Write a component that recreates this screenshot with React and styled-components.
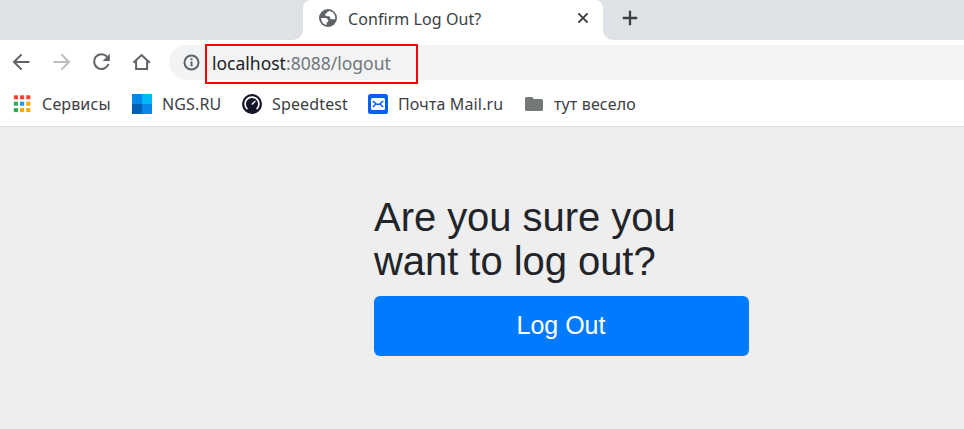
import React from "react";
import styled, { createGlobalStyle } from "styled-components";

const GlobalStyle = createGlobalStyle`
  * { box-sizing: border-box; }
  body { margin: 0; overflow: hidden; background: #eeeeee; }
`;

const Browser = styled.div`
  display: flex;
  flex-direction: column;
  height: 429px;
  overflow: hidden;
  font-family: "Noto Sans", sans-serif;
  color: #3c4043;
`;

const TabStrip = styled.header`
  display: flex;
  height: 40px;
  background: #fff;
`;

const StripSide = styled.div`
  width: ${(p) => p.$width || "auto"};
  flex: ${(p) => (p.$width ? "none" : 1)};
  background: #dee1e6;
  border-radius: ${(p) => (p.$width ? "0 0 10px 0" : "0 0 0 10px")};
`;

const TabBack = styled.div`
  width: 300px;
  background: linear-gradient(#dee1e6 20px, #fff 20px);
`;

const Tab = styled.div`
  display: flex;
  align-items: center;
  height: 40px;
  padding: 0 12px 4px 15px;
  background: #fff;
  border-radius: 8px 8px 0 0;
`;

const TabTitle = styled.span`
  flex: 1;
  margin: 2px 0 0 10px;
  font-size: 16px;
  line-height: 22px;
  letter-spacing: 0.07px;
  white-space: nowrap;
`;

const IconButton = styled.button`
  display: flex;
  padding: 0;
  border: 0;
  background: none;
  color: ${(p) => (p.$muted ? "#babcbe" : "#5f6368")};
`;

const CloseButton = styled(IconButton)`
  color: #3c4043;
`;

const NewTab = styled(IconButton)`
  margin: 10px 0 0 19px;
  color: #3c4043;
`;

const Toolbar = styled.nav`
  display: flex;
  align-items: center;
  height: 45px;
  padding: 0 0 1px 11px;
  gap: 20px;
  background: #fff;
`;

const AddressBar = styled.div`
  display: flex;
  align-items: center;
  flex: 1;
  height: 35px;
  margin: 1px 0 0 -2px;
  padding-left: 13px;
  background: #f1f3f4;
  border-radius: 18px 0 0 18px;
  color: #5f6368;
`;

const UrlBox = styled.div`
  display: flex;
  align-items: center;
  flex: none;
  width: 213px;
  height: 40px;
  margin: 2px 0 0 4px;
  padding: 0 0 2px 5px;
  border: 2px solid #ff0000;
  font-size: 17.5px;
  line-height: 24px;
  color: #73777a;
  white-space: nowrap;
`;

const Host = styled.span`
  color: #202124;
`;

const Bookmarks = styled.nav`
  display: flex;
  height: 42px;
  padding: 0 0 3px 12px;
  background: #fff;
  border-bottom: 1px solid #dadce0;
`;

const Bookmark = styled.a`
  display: flex;
  align-items: center;
  flex: none;
  width: ${(p) => p.$width}px;
  gap: 10px;
  font-size: 16px;
  line-height: 22px;
  letter-spacing: 0.14px;
  white-space: nowrap;
  svg { flex: none; }
`;

const Page = styled.main`
  flex: 1;
  padding: 68px 0 0 374px;
  background: #eeeeee;
  font-family: "Liberation Sans", Arial, sans-serif;
`;

const Heading = styled.h1`
  width: 375px;
  margin: 0 0 13px;
  font-size: 40px;
  font-weight: 400;
  line-height: 44px;
  letter-spacing: -0.05px;
  color: #212529;
`;

const LogoutButton = styled.button`
  display: block;
  width: 375px;
  height: 60px;
  padding: 0 1px 2px 0;
  border: 0;
  border-radius: 6px;
  background: #007bff;
  color: #fff;
  font: 25px/38px "Liberation Sans", Arial, sans-serif;
`;

const Stroke = ({ children, size = 20, width = 2 }) => (
  <svg width={size} height={size} viewBox={`0 0 ${size} ${size}`} fill="none" stroke="currentColor" strokeWidth={width}>
    {children}
  </svg>
);

const GlobeIcon = () => (
  <svg width="20" height="20" viewBox="0 0 20 20">
    <circle cx="10" cy="10" r="9" fill="#5f6368" />
    <path
      d="M11.2 3q-2.2.3-2.3 2.1-1.7.1-1.8 1.7.1 1.3 1.8 1.5h1.9q1.3.2 1.4 1.6.2 1.3 1.6 1.3h3.4q.4-4.9-3-7.1zM3 10.1h4.2q2.9.3 3.2 2.9-.1 1.3-1.8 1.5v2.6Q3.4 16.2 3 10.1z"
      fill="#fff"
    />
  </svg>
);

const GRID_COLORS = ["#f44336", "#f44336", "#f44336", "#34a853", "#2196f3", "#fbab00", "#34a853", "#fbab00", "#fbab00"];

const AppsIcon = () => (
  <svg width="20" height="20" viewBox="0 0 20 20">
    {GRID_COLORS.map((fill, i) => (
      <rect key={i} x={1.8 + (i % 3) * 6.2} y={1.3 + Math.floor(i / 3) * 6.4} width="4.2" height="4" fill={fill} />
    ))}
  </svg>
);

const NgsIcon = () => (
  <svg width="20" height="20" viewBox="0 0 20 20">
    <path fill="#0788e8" d="M0 0h10v10H0z" />
    <path fill="#00b8f5" d="M10 0h10v10H10z" />
    <path fill="#005fb2" d="M0 10h10v10H0z" />
    <path fill="#0788e8" d="M10 10h10v10H10z" />
  </svg>
);

const SpeedtestIcon = () => (
  <svg width="20" height="20" viewBox="0 0 20 20">
    <circle cx="10" cy="10" r="10" fill="#141526" />
    <path d="M5.4 15.1A6.9 6.9 0 1 1 14.6 15.1" fill="none" stroke="#fff" strokeWidth="1.7" />
    <path d="m9.3 9.9 3.8-3.4.8.8-3.4 3.8z" fill="#fff" />
  </svg>
);

const MailIcon = () => (
  <svg width="20" height="20" viewBox="0 0 20 20">
    <rect width="20" height="20" rx="2.5" fill="#005ff9" />
    <rect x="3" y="4" width="14" height="12" rx="1.5" fill="#fff" />
    <path d="m4.8 7 3.4 2.8q1.8 1.2 3.6 0L15.2 7M4.8 13l2.9-2.7M15.2 13l-2.9-2.7" fill="none" stroke="#005ff9" strokeWidth="1.5" />
  </svg>
);

const FolderIcon = () => (
  <svg width="20" height="20" viewBox="0 0 20 20">
    <path d="M1 4.5Q1 3 2.5 3H8l2 2h7.5Q19 5 19 6.5v9q0 1.5-1.5 1.5h-15Q1 17 1 15.5z" fill="#757879" />
  </svg>
);

const BOOKMARKS = [
  { label: "Сервисы", width: 120, Icon: AppsIcon },
  { label: "NGS.RU", width: 110, Icon: NgsIcon },
  { label: "Speedtest", width: 126, Icon: SpeedtestIcon },
  { label: "Почта Mail.ru", width: 156, Icon: MailIcon },
  { label: "тут весело", width: 130, Icon: FolderIcon },
];

export default function App() {
  return (
    <Browser>
      <GlobalStyle />
      <TabStrip>
        <StripSide $width="303px" />
        <TabBack>
          <Tab>
            <GlobeIcon />
            <TabTitle>Confirm Log Out?</TabTitle>
            <CloseButton aria-label="Close tab">
              <Stroke size={16}><path d="m3.4 3.4 9.2 9.2m0-9.2-9.2 9.2" /></Stroke>
            </CloseButton>
          </Tab>
        </TabBack>
        <StripSide>
          <NewTab aria-label="New tab">
            <Stroke size={16} width={2.3}><path d="M8 .8v14.4M.8 8h14.4" /></Stroke>
          </NewTab>
        </StripSide>
      </TabStrip>
      <Toolbar>
        <IconButton aria-label="Back">
          <Stroke><path d="M18.4 10H3.4M10.6 2.4 3 10l7.6 7.6" /></Stroke>
        </IconButton>
        <IconButton $muted aria-label="Forward">
          <Stroke><path d="M2.4 10h15.2M10.4 2.4 18 10l-7.6 7.6" /></Stroke>
        </IconButton>
        <IconButton aria-label="Reload">
          <Stroke>
            <path d="M16 4.6A7.4 7.4 0 1 0 17.5 12" />
            <path d="M18.8 1.8V9h-7.2z" fill="currentColor" stroke="none" />
          </Stroke>
        </IconButton>
        <IconButton aria-label="Home">
          <Stroke><path d="M2.4 10.7 10.6 3l8.2 7.7M5.1 9.2v7.7h11V9.2" /></Stroke>
        </IconButton>
        <AddressBar>
          <Stroke size={19}>
            <circle cx="9.5" cy="9.5" r="7" />
            <path d="M9.5 8.6v4.7M9.5 5.3v2" />
          </Stroke>
          <UrlBox><Host>localhost</Host>:8088/logout</UrlBox>
        </AddressBar>
      </Toolbar>
      <Bookmarks>
        {BOOKMARKS.map(({ label, width, Icon }) => (
          <Bookmark key={label} $width={width}><Icon />{label}</Bookmark>
        ))}
      </Bookmarks>
      <Page>
        <Heading>Are you sure you want to log out?</Heading>
        <LogoutButton>Log Out</LogoutButton>
      </Page>
    </Browser>
  );
}
